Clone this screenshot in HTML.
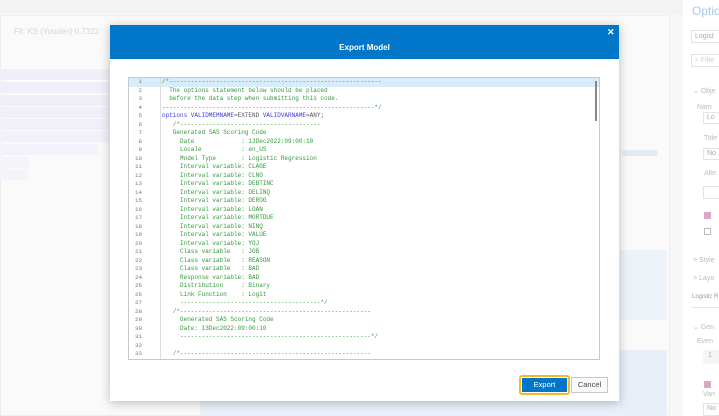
<!DOCTYPE html>
<html><head><style>
*{margin:0;padding:0;box-sizing:border-box}
body{width:719px;height:416px;overflow:hidden;background:#f7f7f8;font-family:"Liberation Sans",sans-serif;position:relative}
.abs{position:absolute}
.code{font-family:"Liberation Mono",monospace;font-size:6px;line-height:8.5px;white-space:pre;color:#2f9a3a}
.ln{font-family:"Liberation Mono",monospace;font-size:5.8px;line-height:8.5px;color:#777;text-align:right;white-space:pre}
.kw{color:#3d3dd8}
.bk{color:#555}
</style></head><body>
<div class="abs" style="left:0;top:0;width:683px;height:14px;background:#f3f3f4"></div>
<div class="abs" style="left:0;top:15px;width:670px;height:401px;background:#fafafb;border:1px solid #eee"></div>
<div class="abs" style="left:14px;top:27px;font-size:8px;color:#d4d4da">Fit: KS (Youden) 0.7322</div>
<div class="abs" style="left:0;top:69px;width:110px;height:11px;background:#f0eef9"></div>
<div class="abs" style="left:0;top:82px;width:110px;height:11px;background:#f0eef9"></div>
<div class="abs" style="left:0;top:95px;width:110px;height:11px;background:#f0eef9"></div>
<div class="abs" style="left:0;top:107px;width:110px;height:11px;background:#f1eff9"></div>
<div class="abs" style="left:0;top:119px;width:110px;height:11px;background:#f1eff9"></div>
<div class="abs" style="left:0;top:131px;width:110px;height:11px;background:#f2f0fa"></div>
<div class="abs" style="left:0;top:144px;width:98px;height:11px;background:#f3f1fa"></div>
<div class="abs" style="left:0;top:157px;width:29px;height:11px;background:#f5f4fb"></div>
<div class="abs" style="left:0;top:169px;width:28px;height:11px;background:#f5f4fb"></div>
<div class="abs" style="left:620px;top:250px;width:47px;height:70px;background:#eef3fa"></div>
<div class="abs" style="left:620px;top:350px;width:47px;height:66px;background:#e8eff9"></div>
<div class="abs" style="left:200px;top:398px;width:420px;height:18px;background:#eaf1fa"></div>
<div class="abs" style="left:622px;top:150px;width:36px;height:6px;background:#e4eaf4;border-radius:3px"></div>
<div class="abs" style="left:683px;top:0;width:36px;height:416px;background:#fff"></div>
<div class="abs" style="left:692px;top:4px;font-size:12px;color:#a9c6ea">Optio</div>
<div class="abs" style="left:691px;top:30px;width:30px;height:13px;border:1px solid #e3e3e3;font-size:7px;color:#aaa;padding:2px 3px">Logist</div>
<div class="abs" style="left:691px;top:54px;width:30px;height:13px;border:1px solid #e3e3e3;font-size:7px;color:#ccc;padding:2px 3px">⌕ Filte</div>
<div class="abs" style="left:693px;top:84px;font-size:7px;color:#bbb;line-height:16px">⌄ Obje<br>&nbsp;&nbsp;Nam</div>
<div class="abs" style="left:703px;top:112px;width:20px;height:12px;border:1px solid #e3e3e3;font-size:7px;color:#aaa;padding:1px 3px">Lo</div>
<div class="abs" style="left:704px;top:135px;font-size:7px;color:#bbb">Title</div>
<div class="abs" style="left:703px;top:148px;width:20px;height:12px;border:1px solid #e3e3e3;font-size:7px;color:#aaa;padding:1px 3px">No</div>
<div class="abs" style="left:704px;top:170px;font-size:7px;color:#bbb">Alte</div>
<div class="abs" style="left:703px;top:186px;width:20px;height:13px;border:1px solid #e3e3e3"></div>
<div class="abs" style="left:704px;top:212px;width:7px;height:7px;background:#d9a8c4"></div>
<div class="abs" style="left:704px;top:228px;width:7px;height:7px;border:1px solid #bbb"></div>
<div class="abs" style="left:693px;top:252px;font-size:7px;color:#bbb;line-height:18px">&gt; Style<br>&gt; Layo</div>
<div class="abs" style="left:692px;top:294px;font-size:6px;color:#999">Logistic R</div>
<div class="abs" style="left:691px;top:307px;width:28px;border-top:1px solid #e5e5e5"></div>
<div class="abs" style="left:693px;top:321px;font-size:7px;color:#bbb;line-height:14px">⌄ Gen<br>&nbsp;&nbsp;Even</div>
<div class="abs" style="left:703px;top:350px;width:20px;height:14px;background:#f5f5f5;font-size:7px;color:#aaa;padding:2px 5px">1</div>
<div class="abs" style="left:704px;top:381px;width:7px;height:7px;background:#d9a8c4"></div>
<div class="abs" style="left:703px;top:391px;font-size:7px;color:#bbb">Vari</div>
<div class="abs" style="left:703px;top:403px;width:20px;height:13px;border:1px solid #e3e3e3;font-size:7px;color:#aaa;padding:1px 3px">No</div>
<div class="abs" style="left:110px;top:25px;width:509px;height:376px;background:#fff;box-shadow:0 2px 10px rgba(0,0,0,.25)"></div>
<div class="abs" style="left:110px;top:25px;width:509px;height:34px;background:#0277c9"></div>
<div class="abs" style="left:110px;top:43px;width:509px;text-align:center;color:#fff;font-size:8px;font-weight:bold">Export Model</div>
<div class="abs" style="left:607px;top:27px;color:#fff;font-size:9px;font-weight:bold">✕</div>
<div class="abs" style="left:128px;top:77px;width:472px;height:283px;border:1px solid #c8c8c8;background:#fff;overflow:hidden">
<div class="abs" style="left:0;top:0;width:470px;height:9px;background:#d8edfb"></div>
<div class="abs" style="left:31px;top:0;width:1px;height:283px;background:#ddd"></div>
<div class="abs" style="left:466px;top:3px;width:2px;height:40px;background:#888"></div>
<div class="abs ln" style="left:0;top:0;width:13px">1
2
3
4
5
6
7
8
9
10
11
12
13
14
15
16
17
18
19
20
21
22
23
24
25
26
27
28
29
30
31
32
33</div>
<div class="abs code" style="left:33px;top:0">/*-----------------------------------------------------------
  The options statement below should be placed
  before the data step when submitting this code.
-----------------------------------------------------------*/
<span class="kw">options VALIDMEMNAME</span><span class="bk">=EXTEND </span><span class="kw">VALIDVARNAME</span><span class="bk">=ANY;</span>
   /*---------------------------------------
   Generated SAS Scoring Code
     Date             : 13Dec2022:09:00:10
     Locale           : en_US
     Model Type       : Logistic Regression
     Interval variable: CLAGE
     Interval variable: CLNO
     Interval variable: DEBTINC
     Interval variable: DELINQ
     Interval variable: DEROG
     Interval variable: LOAN
     Interval variable: MORTDUE
     Interval variable: NINQ
     Interval variable: VALUE
     Interval variable: YOJ
     Class variable   : JOB
     Class variable   : REASON
     Class variable   : BAD
     Response variable: BAD
     Distribution     : Binary
     Link Function    : Logit
     ---------------------------------------*/
   /*-----------------------------------------------------
     Generated SAS Scoring Code
     Date: 13Dec2022:09:00:10
     -----------------------------------------------------*/

   /*-----------------------------------------------------</div>
</div>
<div class="abs" style="left:519px;top:375px;width:51px;height:20px;border:2px solid #f5b928;border-radius:3px"></div>
<div class="abs" style="left:522px;top:378px;width:45px;height:14px;background:#0277c9;color:#fff;font-size:7.5px;text-align:center;line-height:14px">Export</div>
<div class="abs" style="left:571px;top:377px;width:37px;height:16px;border:1px solid #c8c8c8;background:#fafafa;color:#444;font-size:7.5px;text-align:center;line-height:14px">Cancel</div>
</body></html>
